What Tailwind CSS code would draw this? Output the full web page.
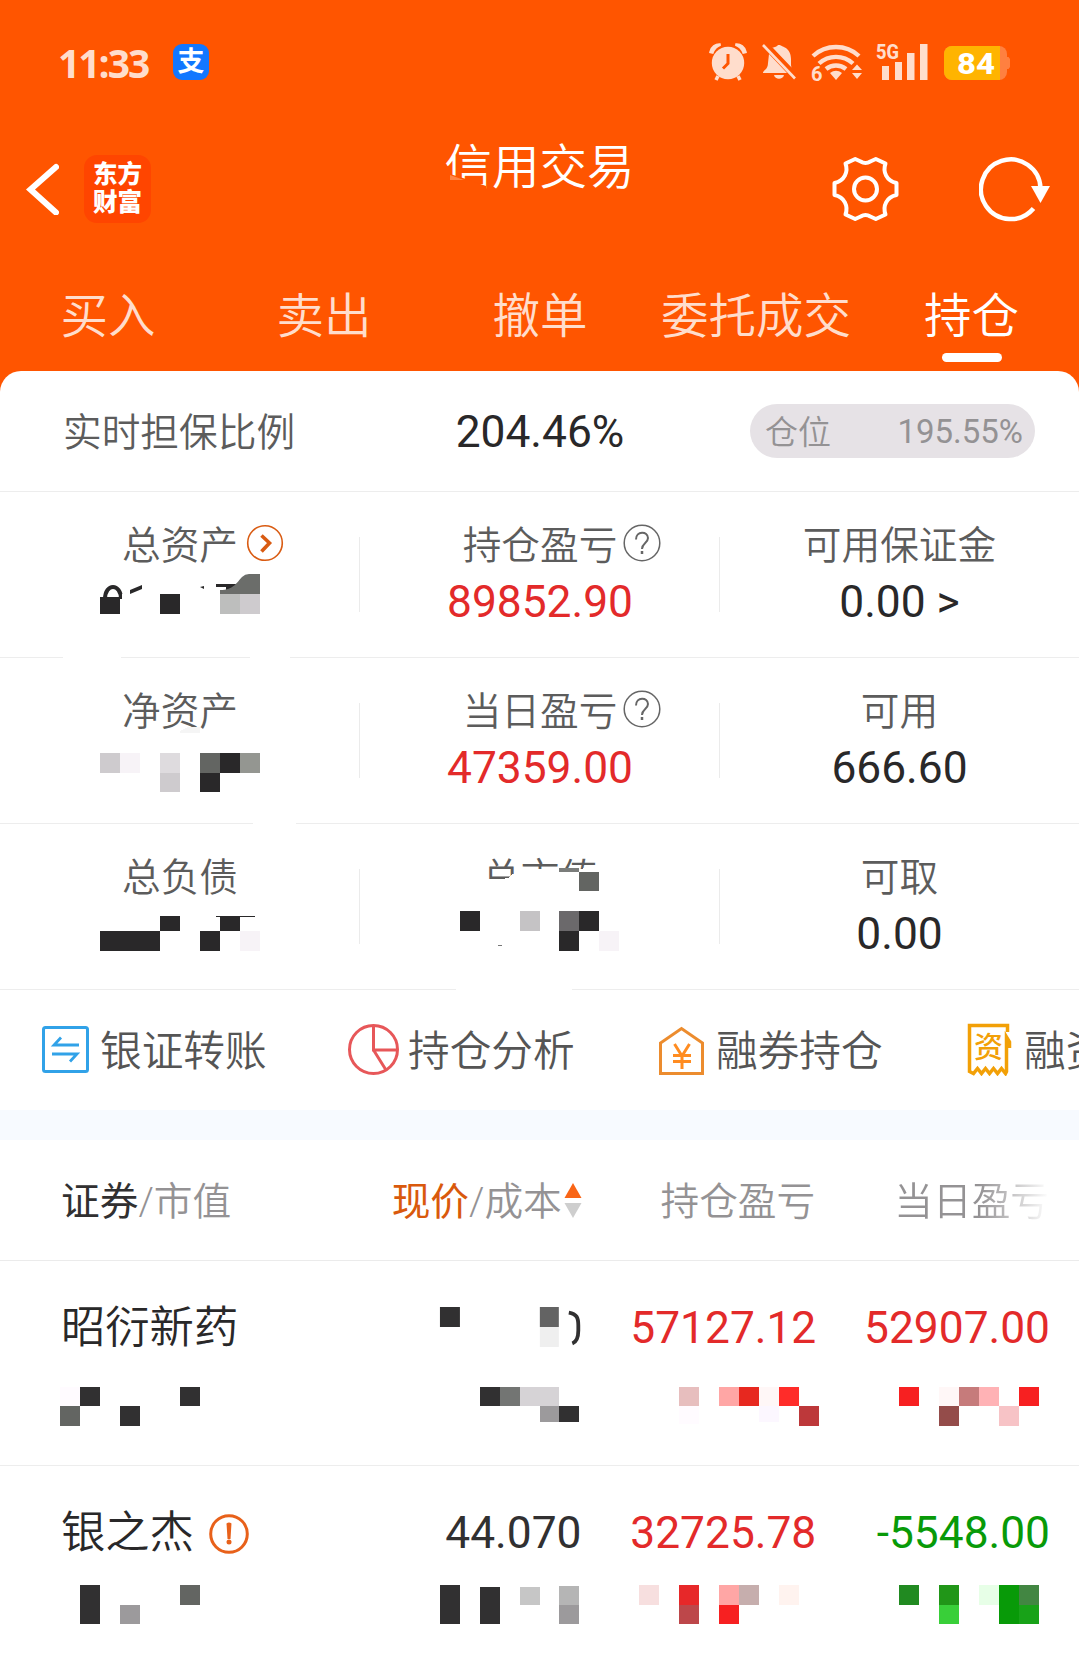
<!DOCTYPE html>
<html lang="zh-CN">
<head>
    <meta charset="UTF-8">
    <meta name="viewport" content="width=device-width, initial-scale=1.0">
    <title>信用交易</title>
    <script src="https://cdn.jsdelivr.net/npm/@tailwindcss/browser@4"></script>
</head>
<body class="bg-[#ff5500] font-['Roboto','Noto_Sans_CJK_SC',sans-serif] text-[#292829] overflow-hidden">
    <div class="w-[1079px] h-[1664px] flex flex-col overflow-hidden">

        <!-- Status bar -->
        <div class="h-[124px] shrink-0 flex items-center pl-[58px] pr-[69px] text-[#ffddcc]">
            <span class="font-['Open_Sans'] font-bold text-[39px] leading-none w-[91px] tracking-[-2px] whitespace-nowrap">11:33</span>
            <span class="ml-[24px] w-[36px] h-[36px] rounded-[9px] bg-[#1277ff] text-white text-[27px] font-bold flex items-center justify-center leading-none">支</span>
            <div class="ml-auto flex items-center">
                <svg width="302" height="44" viewBox="708 40 302 44" fill="#ffddcc">
                    <!-- alarm -->
                    <circle cx="728" cy="63" r="16.2"/>
                    <path d="M710.500 52a9 9 0 0 1 10-7.500c-4 1.500-6.500 4-8 8zM745.500 52a9 9 0 0 0-10-7.500c4 1.500 6.500 4 8 8z" stroke="#ffddcc" stroke-width="2.500"/>
                    <path d="M718 76l-2 4M738 76l2 4" stroke="#ffddcc" stroke-width="3.500"/>
                    <path d="M728 54v9.500l-5 5" fill="none" stroke="#ff5500" stroke-width="3"/>
                    <!-- muted bell -->
                    <path d="M769 54l18 19h-24c0-3 5-3 5-10zM772 48c3-1 5-1.500 6-3h2c1 1.500 11 2 11 14v6c0 2 1 3 2 4l-20-21zM774 75h10c-1 5-9 5-10 0z"/>
                    <path d="M763 45l32 33.500" stroke="#ffddcc" stroke-width="2.600"/>
                    <!-- wifi -->
                    <g fill="none" stroke="#ffddcc" stroke-width="4.400">
                        <path d="M813 56a34 34 0 0 1 46 0"/>
                        <path d="M819 63.500a25 25 0 0 1 34 0"/>
                        <path d="M826 69a16 16 0 0 1 20 0"/>
                    </g>
                    <path d="M830 73q6-4.500 12 0l-6 7z"/>
                    <path d="M852 70l5-5.500 5 5.500zM852 73h10l-5 6z"/>
                    <text x="811" y="80.500" font-family="Roboto" font-size="20" font-weight="700">6</text>
                    <!-- signal -->
                    <text x="876" y="59" font-family="Roboto" font-size="20.500" font-weight="800" textLength="23" lengthAdjust="spacingAndGlyphs">5G</text>
                    <path d="M882 66h7v14h-7zM895 62h7v18h-7zM907 53h7.500v27h-7.500zM920 44h7.500v36h-7.500z"/>
                    <!-- battery -->
                    <rect x="944" y="46" width="63" height="34" rx="8" fill="#ff8040"/>
                    <path d="M1007 57h1.500l1.500 2v8l-1.500 2h-1.500z" fill="#ff8040"/>
                    <path d="M952 46h48v34h-48a8 8 0 0 1-8-8v-18a8 8 0 0 1 8-8z" fill="#ffb400"/>
                    <text x="957" y="74" font-family="Roboto" font-size="30" font-weight="800" fill="#fff" textLength="38" lengthAdjust="spacingAndGlyphs">84</text>
                </svg>
            </div>
        </div>

        <!-- Title bar -->
        <div class="h-[130px] shrink-0 relative flex justify-between items-center text-white pl-[25px] pr-[27px]">
            <div class="flex items-center">
                <svg width="34" height="52" viewBox="25 163.500 34 52"><path d="M56 167.500L30.500 190L56 213" fill="none" stroke="#fff" stroke-width="6" stroke-linecap="round"/></svg>
                <div class="ml-[25px] w-[67px] h-[68px] rounded-[13px] bg-[#ff4500] flex flex-col items-center justify-center text-[24.5px] leading-[28px] font-black">
                    <span>东方</span>
                    <span>财富</span>
                </div>
            </div>
            <h1 class="absolute left-0 w-full top-[14px] text-center text-[47.500px] leading-[60px] font-[350]">信用交易</h1>
            <svg class="absolute left-[440px] top-[40px]" width="60" height="30" viewBox="440 164 60 30">
                <path d="M440 174h10l16 5 20 7v8h-46z" fill="#ff5500"/>
                <path d="M450 175l14 5h-14z" fill="#ff8445"/>
            </svg>
            <div class="flex items-center gap-[79px]">
                <svg width="70" height="70" viewBox="-35.500 -35 70 70" fill="none" stroke="#fff" stroke-width="4">
                    <circle r="11.500"/>
                    <path stroke-linejoin="round" d="M-10.300 -30L-4.800 -27.500Q0 -24.500 4.800 -27.500L10.300 -30L20 -25.500C17 -17 21 -8 31 -6V6C21 8 17 17 20 25.500L10.300 30L4.800 27.500Q0 24.500 -4.800 27.500L-10.300 30L-20 25.500C-17 17 -21 8 -31 6V-6C-21 -8 -17 -17 -20 -25.500Z"/>
                </svg>
                <svg width="73" height="70" viewBox="979 154 73 70">
                    <path d="M1040.500 188A29.800 29.800 0 1 0 1033.500 208.500" fill="none" stroke="#fff" stroke-width="4.500"/>
                    <path d="M1031 186h19l-9.500 17z" fill="#fff"/>
                </svg>
            </div>
        </div>

        <!-- Tabs -->
        <nav class="h-[117px] shrink-0 flex text-[47.500px] leading-[60px] font-[350] text-[#ffddcc] text-center pt-[33px]">
            <span class="w-[216px]">买入</span>
            <span class="w-[216px]">卖出</span>
            <span class="w-[216px]">撤单</span>
            <span class="w-[216px]">委托成交</span>
            <span class="w-[215px] flex flex-col items-center text-white">
                持仓
                <i class="block mt-[6px] w-[60px] h-[9px] rounded-full bg-white"></i>
            </span>
        </nav>

        <main class="bg-white rounded-t-[21px] grow relative">
            <!-- Ratio -->
            <div class="h-[121px] flex items-center border-b border-[#ededed]">
                <span class="w-[360px] pl-[63px] pt-[5px] text-[38.700px] font-[350] text-[#5c5c5c]">实时担保比例</span>
                <span class="w-[360px] pt-[3px] text-center text-[44.300px]">204.46%</span>
                <span class="ml-[30px] w-[285px] h-[54px] rounded-full bg-[#e6e2e6] text-[#949294] text-[33px] flex items-center justify-between pl-[15px] pr-[12px]">
                    <span class="font-[350] pt-[4px]">仓位</span>
                    <span class="pt-[2px]">195.55%</span>
                </span>
            </div>

            <!-- Assets -->
            <div class="grid grid-cols-[360px_360px_359px] text-center text-[44.300px] leading-[57px]">
                <div class="h-[166px] pt-[26px] border-b border-[#ededed]">
                    <p class="text-[38.700px] leading-[56px] font-[350] text-[#5c5c5c]"><span class="relative">总资产<svg class="absolute left-full top-[1px] ml-[8px]" width="38" height="38" viewBox="0 0 38 38" fill="none" stroke="#d95b12"><circle cx="19" cy="19" r="17.300" stroke-width="1.600"/><path d="M15.500 11.500l8 7.500-8 8.500" stroke-width="3.600"/></svg></span></p>
                </div>
                <div class="h-[166px] pt-[26px] border-b border-[#ededed]">
                    <p class="text-[38.700px] leading-[56px] font-[350] text-[#5c5c5c]"><span class="relative">持仓盈亏<svg class="absolute left-full top-[1px] ml-[6px]" width="38" height="38" viewBox="0 0 38 38" fill="none" stroke="#666"><circle cx="19" cy="19" r="17.800" stroke-width="1.500"/><path d="M13 15.500c0-9 12-8.500 12-1.500 0 5-6 5-6 11" stroke-width="2"/><path d="M19 27v3" stroke-width="2.500"/></svg></span></p>
                    <p class="text-[#e32a2a]">89852.90</p>
                </div>
                <div class="h-[166px] pt-[26px] border-b border-[#ededed]">
                    <p class="text-[38.700px] leading-[56px] font-[350] text-[#5c5c5c]">可用保证金</p>
                    <p>0.00 &gt;</p>
                </div>
                <div class="h-[166px] pt-[26px] border-b border-[#ededed]">
                    <p class="text-[38.700px] leading-[56px] font-[350] text-[#5c5c5c]">净资产</p>
                </div>
                <div class="h-[166px] pt-[26px] border-b border-[#ededed]">
                    <p class="text-[38.700px] leading-[56px] font-[350] text-[#5c5c5c]"><span class="relative">当日盈亏<svg class="absolute left-full top-[1px] ml-[6px]" width="38" height="38" viewBox="0 0 38 38" fill="none" stroke="#666"><circle cx="19" cy="19" r="17.800" stroke-width="1.500"/><path d="M13 15.500c0-9 12-8.500 12-1.500 0 5-6 5-6 11" stroke-width="2"/><path d="M19 27v3" stroke-width="2.500"/></svg></span></p>
                    <p class="text-[#e32a2a]">47359.00</p>
                </div>
                <div class="h-[166px] pt-[26px] border-b border-[#ededed]">
                    <p class="text-[38.700px] leading-[56px] font-[350] text-[#5c5c5c]">可用</p>
                    <p>666.60</p>
                </div>
                <div class="h-[166px] pt-[26px] border-b border-[#ededed]">
                    <p class="text-[38.700px] leading-[56px] font-[350] text-[#5c5c5c]">总负债</p>
                </div>
                <div class="h-[166px] pt-[26px] border-b border-[#ededed]">
                    <p class="text-[38.700px] leading-[56px] font-[350] text-[#5c5c5c]">总市值</p>
                </div>
                <div class="h-[166px] pt-[26px] border-b border-[#ededed]">
                    <p class="text-[38.700px] leading-[56px] font-[350] text-[#5c5c5c]">可取</p>
                    <p>0.00</p>
                </div>
            </div>

            <!-- Mosaic laid over the private amounts -->
            <svg class="absolute left-0 top-[121px]" width="1079" height="502" viewBox="0 492 1079 502" shape-rendering="crispEdges">
                <path d="M359 537h1v75h-1zM719 537h1v75h-1zM359 703h1v75h-1zM719 703h1v75h-1zM359 869h1v75h-1zM719 869h1v75h-1z" fill="#ebebeb"/>
                <path d="M63 655h58v5h-58zM250 655h40v5h-40zM253 821h43v5h-43zM456 987h116v5h-116z" fill="#fff"/>
                <!-- total assets -->
                <g shape-rendering="auto">
                    <path d="M105 599c0-16 16-16 16 0" fill="none" stroke="#292829" stroke-width="4"/>
                    <path d="M130 590l12-5v4l-12 5zM200 587l4-1v3zM216 584h20v3h-20zM226 587h8v4h-8z" fill="#292829"/>
                    <path d="M220 594v-4c14 0 17-8 22-13q3-3 7-3h11v20z" fill="#6b6d6a"/>
                </g>
                <path d="M100 597h20v17h-20zM160 594h20v20h-20z" fill="#292829"/>
                <path d="M122 594h18v16h-18z" fill="#fff"/>
                <path d="M220 594h20v20h-20z" fill="#bdbebd"/>
                <path d="M240 594h20v20h-20z" fill="#cecbce"/>
                <!-- net assets -->
                <path d="M180 731l8-4h12v6h-20z" fill="#f5f5f5"/>
                <path d="M100 753h20v20h-20zM160 773h20v19h-20z" fill="#cecbce"/>
                <path d="M120 753h20v20h-20z" fill="#f7f3f7"/>
                <path d="M160 753h20v20h-20z" fill="#dedbde"/>
                <path d="M200 753h20v20h-20z" fill="#636562"/>
                <path d="M220 753h20v20h-20zM200 773h20v19h-20z" fill="#292829"/>
                <path d="M240 753h20v20h-20z" fill="#949691"/>
                <!-- total debt -->
                <path d="M160 916h20v15h-20zM220 916h20v15h-20zM100 931h60v20h-60zM200 931h20v20h-20zM216 916h39v1h-39z" fill="#292829"/>
                <path d="M240 931h20v20h-20z" fill="#f7f3f7"/>
                <!-- market value -->
                <path d="M480 881l16-1 12-2 10-8 40-1 50-1v40h-128z" fill="#fff"/>
                <path d="M559 868h20v4h-20z" fill="#7b7d7b"/>
                <path d="M579 872h20v19h-20z" fill="#636562"/>
                <path d="M460 911h20v20h-20zM579 911h20v20h-20zM559 931h20v20h-20z" fill="#292829"/>
                <path d="M520 911h20v20h-20z" fill="#c5c3c5"/>
                <path d="M559 911h20v20h-20z" fill="#6b696b"/>
                <path d="M599 931h20v20h-20z" fill="#f7f3f7"/>
                <path d="M498 945h4v1h-4z" fill="#777"/>
            </svg>

            <!-- Shortcuts -->
            <div class="h-[120px] flex pl-[40px] pb-[2px] text-[41.700px] font-[350] text-[#555] whitespace-nowrap overflow-hidden">
                <div class="w-[308px] shrink-0 flex items-center gap-[9px]">
                    <svg width="51" height="54" viewBox="40 1022 51 54" fill="none" stroke="#31a2e8" stroke-width="3"><rect x="43.500" y="1027.500" width="44" height="44" rx="2"/><path d="M79 1045H54l7-7.500M52 1054h25l-7 7.500" stroke-width="2.800"/></svg>
                    <span class="pt-[6px]">银证转账</span>
                </div>
                <div class="w-[308px] shrink-0 flex items-center gap-[9px]">
                    <svg width="51" height="54" viewBox="348 1022 51 54" fill="none" stroke="#e75759" stroke-width="3"><circle cx="373.500" cy="1049.500" r="24"/><path d="M373.500 1025v25h24M373.500 1050l12.500 20"/></svg>
                    <span class="pt-[6px]">持仓分析</span>
                </div>
                <div class="w-[308px] shrink-0 flex items-center gap-[9px]">
                    <svg width="51" height="54" viewBox="656 1022 51 54" fill="none" stroke="#ec8c2e" stroke-width="3"><path d="M660.500 1073.500v-30.500l21-14.500 21 14.500v30.500z"/><path d="M674.500 1044l7.500 12 7.500-12M682 1056v13M673 1055.500h18M673 1061.500h18" stroke="#ff8c21"/></svg>
                    <span class="pt-[6px]">融券持仓</span>
                </div>
                <div class="shrink-0 flex items-center gap-[9px]">
                    <svg width="51" height="54" viewBox="964 1022 51 54"><path d="M1007.500 1032v-6.500h-38v46l4 2 4-5 4 5 4-5 4 5 4-5 4 5 4-5 4 5 1-2V1037l3 5v6" fill="none" stroke="#f2a007" stroke-width="3.500"/><text x="988.500" y="1058" font-size="29" font-weight="500" text-anchor="middle" fill="#f2a007">资</text></svg>
                    <span class="pt-[6px]">融资</span>
                </div>
            </div>

            <div class="h-[30px] bg-[#f7faff]"></div>

            <!-- Holdings head -->
            <div class="h-[121px] flex items-center border-b border-[#ebebeb] pt-[5px] text-[38.700px] font-[350] text-[#949294] pl-[61px] pr-[30px]">
                <span class="w-[331px]"><span class="text-[#313031] font-normal">证券</span>/市值</span>
                <span class="w-[191px] flex items-center whitespace-nowrap"><span class="text-[#d9590c] font-normal">现价</span>/成本<svg class="shrink-0 ml-[2px] mb-[3px]" width="18" height="36" viewBox="0 0 18 36"><path d="M9 0l8.500 15h-17z" fill="#f96516"/><path d="M9 35l8.500-15h-17z" fill="#cecece"/></svg></span>
                <span class="w-[233px] text-right">持仓盈亏</span>
                <span class="w-[234px] text-right bg-linear-to-r from-[#949294] from-70% to-white to-100% bg-clip-text text-transparent">当日盈亏</span>
            </div>

            <!-- Holdings -->
            <div class="h-[205px] border-b border-[#ededed]">
                <div class="h-[126px] pt-[39px] flex text-[44.300px] leading-[57px] pl-[61px] pr-[29px]">
                    <span class="w-[330px] font-[350]">昭衍新药</span>
                    <svg class="w-[191px] -mt-[1px]" width="191" height="57" viewBox="391 1299 191 57">
                        <path d="M440 1307h20v20h-20z" fill="#313031"/>
                        <path d="M540 1307h19v20h-19z" fill="#636363"/>
                        <path d="M540 1327h19v20h-19z" fill="#efefef"/>
                        <path d="M569 1312.500c8 1.500 9.500 5 9.500 13v5c0 8-2 11.500-6 13" fill="none" stroke="#313031" stroke-width="3.800"/>
                    </svg>
                    <span class="w-[235px] text-right text-[#e32a2a]">57127.12</span>
                    <span class="w-[234px] text-right text-[#e32a2a]">52907.00</span>
                </div>
                <svg width="1079" height="39" viewBox="0 1387 1079 39" shape-rendering="crispEdges">
                    <path d="M60 1387h20v19h-20zM679 1406h20v18h-20z" fill="#fffbff"/>
                    <path d="M80 1387h20v19h-20zM180 1387h20v19h-20zM120 1406h20v20h-20zM480 1387h20v19h-20zM559 1406h20v16h-20z" fill="#313031"/>
                    <path d="M60 1406h20v20h-20z" fill="#636562"/>
                    <path d="M500 1387h20v19h-20z" fill="#737573"/>
                    <path d="M520 1387h39v19h-39z" fill="#d6d3d6"/>
                    <path d="M540 1406h19v16h-19z" fill="#9c9a9c"/>
                    <path d="M679 1387h20v19h-20z" fill="#e7bebe"/>
                    <path d="M719 1387h20v19h-20z" fill="#ffa6a5"/>
                    <path d="M739 1387h20v19h-20z" fill="#e7281f"/>
                    <path d="M759 1387h20v19h-20zM939 1387h20v19h-20z" fill="#fff7f7"/>
                    <path d="M779 1387h20v19h-20z" fill="#ff2c29"/>
                    <path d="M759 1406h20v16h-20z" fill="#fcf7ff"/>
                    <path d="M799 1406h20v20h-20z" fill="#bd383a"/>
                    <path d="M899 1387h20v19h-20zM1019 1387h20v19h-20z" fill="#f72021"/>
                    <path d="M959 1387h20v19h-20z" fill="#c67b7b"/>
                    <path d="M979 1387h20v19h-20z" fill="#ffb2b5"/>
                    <path d="M939 1406h20v20h-20z" fill="#944c4a"/>
                    <path d="M999 1406h20v20h-20z" fill="#f7c3c6"/>
                </svg>
            </div>
            <div class="h-[198px]">
                <div class="h-[119px] pt-[39px] flex items-start text-[44.300px] leading-[57px] pl-[61px] pr-[29px]">
                    <span class="w-[330px] font-[350] flex items-center">银之杰
                        <svg class="ml-[14px]" width="42" height="42" viewBox="0 0 42 42" fill="none" stroke="#e8611a"><circle cx="21" cy="21" r="18.300" stroke-width="3"/><path d="M18.500 10.500q2.500-2 5 0l-1 15.500h-3z" fill="#e8611a" stroke="none"/><circle cx="21" cy="29" r="2.500" fill="#e8611a" stroke="none"/></svg>
                    </span>
                    <span class="w-[191px] text-right text-[#313031]">44.070</span>
                    <span class="w-[235px] text-right text-[#e32a2a]">32725.78</span>
                    <span class="w-[234px] text-right text-[#089a08]">-5548.00</span>
                </div>
                <svg width="1079" height="39" viewBox="0 1585 1079 39" shape-rendering="crispEdges">
                    <path d="M80 1585h20v39h-20zM440 1585h20v39h-20zM480 1587h20v37h-20z" fill="#313031"/>
                    <path d="M120 1605h20v19h-20zM559 1605h20v19h-20z" fill="#9c9a9c"/>
                    <path d="M180 1585h20v20h-20z" fill="#636562"/>
                    <path d="M520 1587h20v18h-20z" fill="#c6c6c6"/>
                    <path d="M559 1586h20v19h-20z" fill="#b5b5b5"/>
                    <path d="M639 1585h20v20h-20z" fill="#f7dfdf"/>
                    <path d="M679 1585h20v20h-20z" fill="#e72829"/>
                    <path d="M679 1605h20v19h-20z" fill="#bd474a"/>
                    <path d="M719 1585h20v20h-20z" fill="#ffa6a5"/>
                    <path d="M719 1605h20v19h-20z" fill="#f72021"/>
                    <path d="M739 1585h20v20h-20z" fill="#c6aead"/>
                    <path d="M779 1585h20v20h-20z" fill="#fff3ef"/>
                    <path d="M899 1585h20v20h-20z" fill="#218a21"/>
                    <path d="M939 1585h20v20h-20z" fill="#219618"/>
                    <path d="M939 1605h20v19h-20z" fill="#39cf39"/>
                    <path d="M979 1585h20v20h-20z" fill="#e7ffe7"/>
                    <path d="M999 1585h20v39h-20z" fill="#089a08"/>
                    <path d="M1019 1585h20v20h-20z" fill="#428642"/>
                    <path d="M1019 1605h20v19h-20z" fill="#18a218"/>
                </svg>
            </div>
        </main>
    </div>
</body>
</html>
